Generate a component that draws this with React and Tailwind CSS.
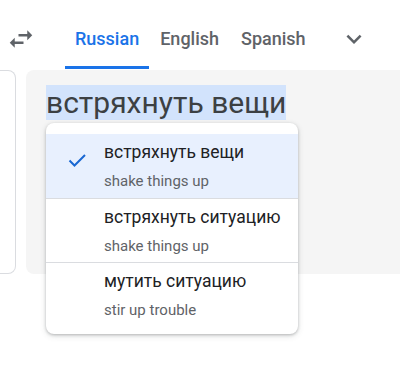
import React from "react";

const items = [
  { main: "встряхнуть вещи", sub: "shake things up", selected: true },
  { main: "встряхнуть ситуацию", sub: "shake things up" },
  { main: "мутить ситуацию", sub: "stir up trouble" },
];

export default function App() {
  return (
    <div className="w-[400px] h-[369px] bg-white overflow-hidden" style={{ fontFamily: "Roboto, 'Noto Sans', sans-serif" }}>
      <div className="flex items-end h-[69px]">
        <svg className="ml-[6px] mb-[15px] shrink-0" width="30" height="30" viewBox="0 0 24 24" fill="#5f6368">
          <path d="M6.99 11L3 15l3.99 4v-3H14v-2H6.99v-3zM21 9l-3.99-4v3H10v2h7.01v3L21 9z" />
        </svg>
        <div className="ml-[29px] flex">
          <div className="px-[10px] pb-[17px] border-b-[3px] border-[#1a73e8] text-[18px] leading-[20px] font-medium text-[#1a73e8]">Russian</div>
          <div className="px-[11px] pb-[17px] border-b-[3px] border-transparent text-[18px] leading-[20px] font-medium text-[#5f6368]">English</div>
          <div className="px-[11px] pb-[17px] border-b-[3px] border-transparent text-[18px] leading-[20px] font-medium text-[#5f6368]">Spanish</div>
        </div>
        <svg className="ml-[22px] mb-[15px] shrink-0" width="30" height="30" viewBox="0 0 24 24" fill="#5f6368">
          <path d="M16.59 8.59L12 13.17 7.41 8.59 6 10l6 6 6-6z" />
        </svg>
      </div>
      <div className="flex mt-px h-[204px]">
        <div className="w-[16px] shrink-0 border border-l-0 border-[#dadce0] rounded-r-lg bg-white" />
        <div className="relative ml-[10px] flex-1 bg-[#f5f5f5] rounded-l-lg pl-[20px] pt-[15px]">
          <div className="text-[30px] leading-[35px] text-[#3c4043]">
            <span className="bg-[#d2e3fc] inline-block">встряхнуть вещи</span>
          </div>
          <div className="absolute left-[20px] top-[53px] w-[252px] bg-white rounded-lg pt-[11px] pb-[8px] shadow-[0_1px_3px_rgba(60,64,67,0.3),0_2px_6px_rgba(60,64,67,0.15)] z-10">
            {items.map((it, i) => (
              <div key={i} className={(i > 0 ? "border-t border-[#dadce0] " : "") + (it.selected ? "bg-[#e8f0fe] " : "") + "relative h-[64px] pl-[58px] pt-[7px]"}>
                {it.selected && (
                  <svg className="absolute left-[21px] top-[19px]" width="20" height="20" viewBox="0 0 20 20" fill="none" stroke="#1967d2" strokeWidth="2">
                    <polyline points="2.5,7.5 7.5,12.5 18,2" />
                  </svg>
                )}
                <div className="text-[17.5px] leading-[22px] text-[#202124]">{it.main}</div>
                <div className="mt-[9px] text-[15px] leading-[18px] text-[#5f6368]">{it.sub}</div>
              </div>
            ))}
          </div>
        </div>
      </div>
    </div>
  );
}
